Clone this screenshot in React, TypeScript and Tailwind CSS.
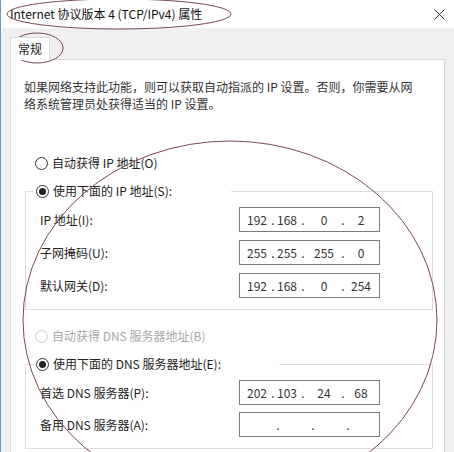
const font = { fontFamily: '"Noto Sans CJK SC", "Microsoft YaHei", sans-serif' };

// field widths / dot widths for the IP control, in px
const filled = [28, 4, 24, 8, 34, 4, 32];
const empty = [33, 4, 31, 4, 31, 4, 31];

function IpBox({ parts }: { parts: string[] }) {
  const w = parts.every((p) => p === "") ? empty : filled;
  return (
    <div className="flex h-[25px] w-[141px] items-center border border-[#7a7a7a] bg-white pl-[3px] text-[12px] text-[#333]">
      {[0, 1, 2, 3].map((i) => (
        <div key={i} className="flex items-center">
          <span className="text-center leading-none" style={{ width: w[i * 2] }}>
            {parts[i]}
          </span>
          {i < 3 && (
            <span className="text-center leading-none" style={{ width: w[i * 2 + 1] }}>
              .
            </span>
          )}
        </div>
      ))}
    </div>
  );
}

function Radio({
  label,
  checked = false,
  disabled = false,
}: {
  label: string;
  checked?: boolean;
  disabled?: boolean;
}) {
  return (
    <div className="flex h-[20px] items-center gap-[4px]">
      <span
        className={
          disabled
            ? "flex h-[13px] w-[13px] items-center justify-center rounded-full border border-[#cfcfcf] bg-white"
            : "flex h-[13px] w-[13px] items-center justify-center rounded-full border border-[#333] bg-white"
        }
      >
        {checked && <span className="h-[7px] w-[7px] rounded-full bg-[#222]" />}
      </span>
      <span className={disabled ? "text-[12px] text-[#a8a8a8]" : "text-[12px] text-[#222]"}>
        {label}
      </span>
    </div>
  );
}

function Row({ label, parts }: { label: string; parts: string[] }) {
  return (
    <div className="flex h-[25px] items-center">
      <span className="w-[199px] text-[12px] leading-[18px] text-[#222]">{label}</span>
      <IpBox parts={parts} />
    </div>
  );
}

export default function App() {
  return (
    <div
      className="relative h-[452px] w-[454px] overflow-hidden border-l border-[#5f9cc5] bg-[#f0f0f0]"
      style={font}
    >
      {/* title bar */}
      <div className="flex h-[28px] items-center justify-between bg-white pl-[9px] pr-[8px]">
        <span className="text-[12px] text-[#111]">Internet 协议版本 4 (TCP/IPv4) 属性</span>
        <svg width="11" height="11" viewBox="0 0 11 11" className="mr-[1px]">
          <path d="M0.5 0.5L10.5 10.5M10.5 0.5L0.5 10.5" stroke="#333" strokeWidth="1" />
        </svg>
      </div>

      <div className="ml-[9px] mr-[9px] pt-[7px]">
        {/* tab */}
        <div className="relative z-10 -mb-px inline-flex h-[23px] items-center border border-b-0 border-[#d9d9d9] bg-white px-[7px] text-[12px] text-[#222]">
          常规
        </div>

        {/* panel */}
        <div className="h-[420px] border border-[#d9d9d9] bg-white pl-[13px] pt-[18px]">
          <p className="whitespace-nowrap text-[12px] leading-[17px] text-[#333]">
            如果网络支持此功能，则可以获取自动指派的 IP 设置。否则，你需要从网
            <br />
            络系统管理员处获得适当的 IP 设置。
          </p>

          <div className="ml-[11px] mt-[41px]">
            <Radio label="自动获得 IP 地址(O)" />
          </div>

          <fieldset className="ml-px mt-[8px] w-[408px] border border-[#dcdcdc] pb-[11px] pl-[14px] pt-[6px]">
            <legend className="ml-[-6px] w-[197px] pl-[2px]">
              <Radio label="使用下面的 IP 地址(S):" checked />
            </legend>
            <div className="flex flex-col gap-[8px]">
              <Row label="IP 地址(I):" parts={["192", "168", "0", "2"]} />
              <Row label="子网掩码(U):" parts={["255", "255", "255", "0"]} />
              <Row label="默认网关(D):" parts={["192", "168", "0", "254"]} />
            </div>
          </fieldset>

          <div className="ml-[11px] mt-[16px]">
            <Radio label="自动获得 DNS 服务器地址(B)" disabled />
          </div>

          <fieldset className="ml-px mt-[8px] w-[408px] border border-[#dcdcdc] pb-[11px] pl-[14px] pt-[6px]">
            <legend className="ml-[-6px] w-[245px] pl-[2px]">
              <Radio label="使用下面的 DNS 服务器地址(E):" checked />
            </legend>
            <div className="flex flex-col gap-[7px]">
              <Row label="首选 DNS 服务器(P):" parts={["202", "103", "24", "68"]} />
              <Row label="备用 DNS 服务器(A):" parts={["", "", "", ""]} />
            </div>
          </fieldset>
        </div>
      </div>

      {/* hand-drawn annotation rings */}
      <svg
        className="pointer-events-none absolute left-[-1px] top-0"
        width="454"
        height="452"
        viewBox="0 0 454 452"
        fill="none"
      >
        <ellipse cx="119" cy="14" rx="112" ry="15" stroke="#7a4a4a" strokeWidth="1" />
        <ellipse cx="37" cy="48" rx="26" ry="15" stroke="#7a4a4a" strokeWidth="1" />
        <ellipse cx="230" cy="320" rx="207" ry="179" stroke="#7a4a4a" strokeWidth="1" />
      </svg>
    </div>
  );
}
